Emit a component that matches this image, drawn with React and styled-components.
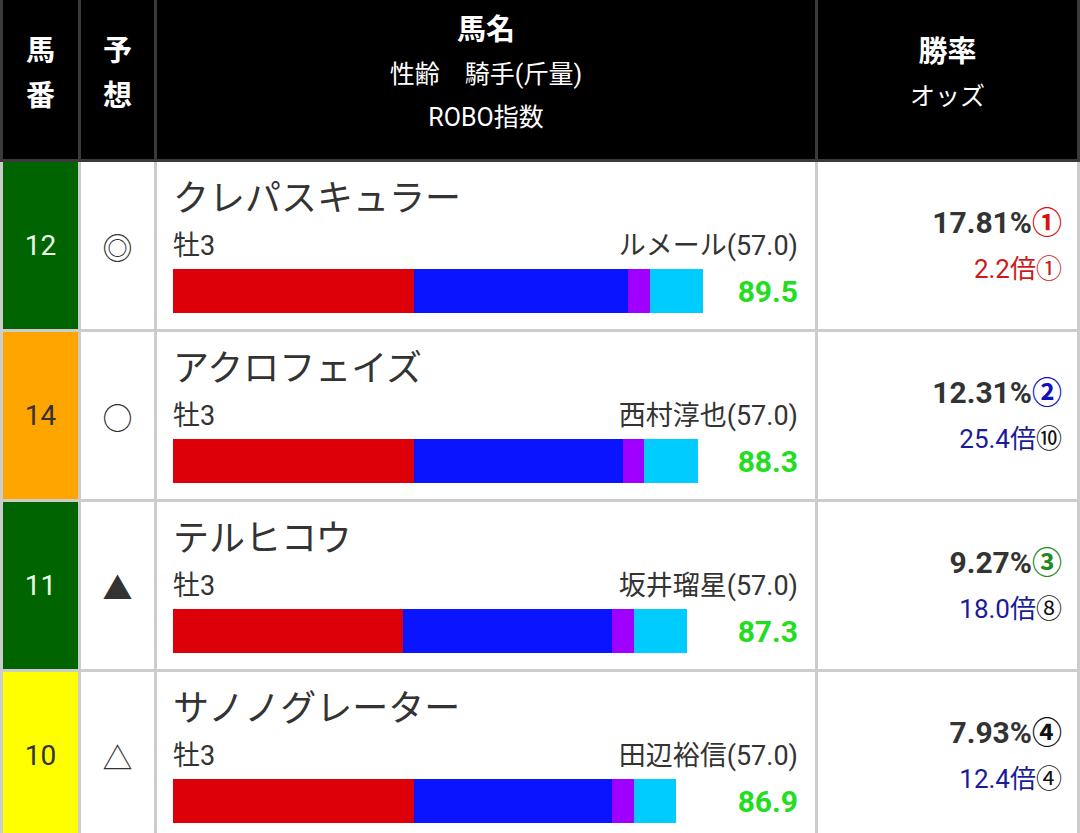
import React from 'react'
import styled, { createGlobalStyle } from 'styled-components'

const GlobalStyle = createGlobalStyle`
  html, body {
    margin: 0;
    padding: 0;
    background: #fff;
  }
  body {
    font-family: Roboto, "Noto Sans CJK JP", sans-serif;
    color: #333;
  }
`

const COLS = '75px 73px 658px 259px'

const Sheet = styled.div`
  display: flex;
  flex-direction: column;
  width: 1080px;
`

const HeadRow = styled.div`
  display: grid;
  grid-template-columns: ${COLS};
  column-gap: 3px;
  padding: 0 3px 3px;
  background: #3a3a3a;
`

const HeadCell = styled.div`
  height: 159px;
  box-sizing: border-box;
  padding-bottom: 12px;
  background: #000;
  color: #fff;
  display: flex;
  flex-direction: column;
  align-items: center;
  justify-content: center;
  text-align: center;
`

const HeadTitle = styled.div`
  font-size: 29px;
  font-weight: 700;
  line-height: 45px;
`

const HeadSub = styled.div`
  font-size: 25px;
  line-height: 43px;
  white-space: pre;
`

const Row = styled.div`
  display: grid;
  grid-template-columns: ${COLS};
  column-gap: 3px;
  padding: 0 3px 3px;
  background: #cccccc;
`

const NumCell = styled.div`
  height: 167px;
  background: ${p => p.$bg};
  color: ${p => p.$fg};
  font-size: 28px;
  display: flex;
  align-items: center;
  justify-content: center;
`

const MarkCell = styled.div`
  background: #fff;
  color: #333;
  font-family: "Noto Sans CJK JP", sans-serif;
  font-size: 30px;
  display: flex;
  align-items: center;
  justify-content: center;
`

const NameCell = styled.div`
  background: #fff;
  box-sizing: border-box;
  padding: 15px 17px 0 16px;
  display: flex;
  flex-direction: column;
`

const HorseName = styled.div`
  font-size: 36px;
  line-height: 44px;
  color: #333;
  white-space: nowrap;
`

const InfoLine = styled.div`
  display: flex;
  justify-content: space-between;
  font-size: 27px;
  line-height: 34px;
  margin-top: 8px;
  color: #333;
`

const BarLine = styled.div`
  display: flex;
  justify-content: space-between;
  align-items: center;
  height: 44px;
  margin-top: 6px;
`

const Bar = styled.div`
  display: flex;
  height: 44px;
`

const Segment = styled.div`
  height: 100%;
  background: ${p => p.$color};
`

const Score = styled.div`
  font-size: 30px;
  font-weight: 700;
  color: #22dd22;
`

const RateCell = styled.div`
  background: #fff;
  box-sizing: border-box;
  padding-right: 15px;
  display: flex;
  flex-direction: column;
  align-items: flex-end;
  justify-content: center;
  gap: 6px;
`

const WinRate = styled.div`
  font-size: 30px;
  font-weight: 700;
  line-height: 40px;
  color: #333;
`

const Rank = styled.span`
  color: ${p => p.$color};
`

const Odds = styled.div`
  font-size: 26px;
  line-height: 40px;
  color: ${p => p.$color};
`

const SEG_COLORS = ['#dd0008', '#0a14ff', '#a000ff', '#00ccff']

const horses = [
  {
    num: 12, bg: '#006400', fg: '#e8ffe8', mark: '◎',
    name: 'クレパスキュラー', sex: '牡3', jockey: 'ルメール(57.0)',
    bar: [241, 214, 22, 53], score: '89.5',
    rate: '17.81%', rank: '①', rankColor: '#dd1111',
    odds: '2.2倍', oddsColor: '#cc1a1a', oddsRank: '①', oddsRankColor: '#cc1a1a',
  },
  {
    num: 14, bg: '#ffa500', fg: '#333', mark: '○',
    name: 'アクロフェイズ', sex: '牡3', jockey: '西村淳也(57.0)',
    bar: [241, 209, 21, 54], score: '88.3',
    rate: '12.31%', rank: '②', rankColor: '#1111bb',
    odds: '25.4倍', oddsColor: '#1a1a9a', oddsRank: '⑩', oddsRankColor: '#111',
  },
  {
    num: 11, bg: '#006400', fg: '#e8ffe8', mark: '▲',
    name: 'テルヒコウ', sex: '牡3', jockey: '坂井瑠星(57.0)',
    bar: [230, 209, 22, 53], score: '87.3',
    rate: '9.27%', rank: '③', rankColor: '#228822',
    odds: '18.0倍', oddsColor: '#1a1a9a', oddsRank: '⑧', oddsRankColor: '#111',
  },
  {
    num: 10, bg: '#ffff00', fg: '#333', mark: '△',
    name: 'サノノグレーター', sex: '牡3', jockey: '田辺裕信(57.0)',
    bar: [241, 198, 22, 42], score: '86.9',
    rate: '7.93%', rank: '④', rankColor: '#111',
    odds: '12.4倍', oddsColor: '#1a1a9a', oddsRank: '④', oddsRankColor: '#111',
  },
]

const App = () => (
  <>
    <GlobalStyle />
    <Sheet>
      <HeadRow>
        <HeadCell>
          <HeadTitle>馬</HeadTitle>
          <HeadTitle>番</HeadTitle>
        </HeadCell>
        <HeadCell>
          <HeadTitle>予</HeadTitle>
          <HeadTitle>想</HeadTitle>
        </HeadCell>
        <HeadCell>
          <HeadTitle>馬名</HeadTitle>
          <HeadSub>性齢　騎手(斤量)</HeadSub>
          <HeadSub>ROBO指数</HeadSub>
        </HeadCell>
        <HeadCell>
          <HeadTitle>勝率</HeadTitle>
          <HeadSub>オッズ</HeadSub>
        </HeadCell>
      </HeadRow>

      {horses.map(h => (
        <Row key={h.num}>
          <NumCell $bg={h.bg} $fg={h.fg}>{h.num}</NumCell>
          <MarkCell>{h.mark}</MarkCell>
          <NameCell>
            <HorseName>{h.name}</HorseName>
            <InfoLine>
              <span>{h.sex}</span>
              <span>{h.jockey}</span>
            </InfoLine>
            <BarLine>
              <Bar>
                {h.bar.map((w, i) => (
                  <Segment key={i} $color={SEG_COLORS[i]} style={{ width: w }} />
                ))}
              </Bar>
              <Score>{h.score}</Score>
            </BarLine>
          </NameCell>
          <RateCell>
            <WinRate>
              {h.rate}
              <Rank $color={h.rankColor}>{h.rank}</Rank>
            </WinRate>
            <Odds $color={h.oddsColor}>
              {h.odds}
              <Rank $color={h.oddsRankColor}>{h.oddsRank}</Rank>
            </Odds>
          </RateCell>
        </Row>
      ))}
    </Sheet>
  </>
)

export default App
